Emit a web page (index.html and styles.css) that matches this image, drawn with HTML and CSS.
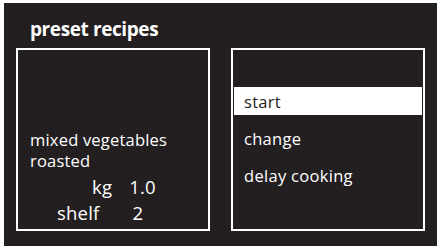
FILE: index.html
```html
<!DOCTYPE html>
<html>
<head>
<meta charset="utf-8">
<link rel="stylesheet" href="styles.css">
</head>
<body>
<div class="screen">
  <h1 class="title">preset recipes</h1>
  <div class="panels">
    <div class="panel recipe">
      <div class="name">mixed vegetables<br>roasted</div>
      <div class="row row-kg"><span class="label">kg</span><span class="value">1.0</span></div>
      <div class="row row-shelf"><span class="label">shelf</span><span class="value">2</span></div>
    </div>
    <div class="panel menu">
      <div class="item active">start</div>
      <div class="item">change</div>
      <div class="item">delay cooking</div>
    </div>
  </div>
</div>
</body>
</html>
```

FILE: styles.css
```css
html, body {
  margin: 0;
  padding: 0;
  background: #ffffff;
}
body {
  padding: 3px 0 0 4px;
  width: 437px;
  height: 246px;
  box-sizing: border-box;
  overflow: hidden;
}
.screen {
  background: #231f20;
  height: 243px;
  color: #ffffff;
  font-family: "Open Sans", "Noto Sans", sans-serif;
}
.title {
  margin: 0;
  padding: 14px 0 0 26px;
  height: 31px;
  font-size: 19px;
  font-weight: 700;
  line-height: 24px;
  letter-spacing: -0.4px;
}
.panels {
  display: flex;
  gap: 21px;
  padding-left: 12px;
}
.panel {
  width: 194px;
  height: 183px;
  box-sizing: border-box;
  border: 2px solid #ffffff;
}
.recipe {
  padding: 79px 0 0 12px;
  font-size: 16.5px;
  line-height: 21px;
  letter-spacing: 0.2px;
}
.row {
  display: flex;
  font-size: 18.5px;
  line-height: 26px;
}
.row-kg { margin-top: 3px; }
.row-kg .label { padding-left: 62px; }
.row-kg .value { padding-left: 17px; }
.row-shelf .label { padding-left: 27px; }
.row-shelf .value { padding-left: 33px; }
.menu {
  padding: 37px 1px 0 1px;
  display: flex;
  flex-direction: column;
  gap: 9px;
}
.item {
  height: 28px;
  line-height: 29px;
  padding-left: 10px;
  font-size: 16.5px;
  letter-spacing: 0.3px;
}
.item.active {
  background: #ffffff;
  color: #231f20;
}
```
